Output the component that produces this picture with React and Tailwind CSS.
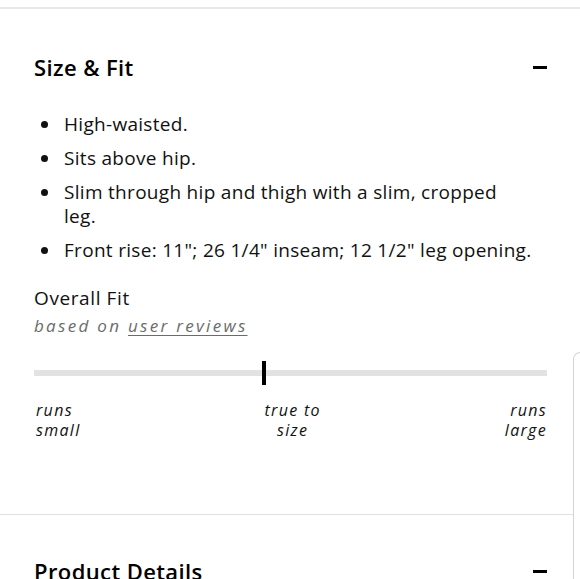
export default function App() {
  const bullets = [
    ['High-waisted.'],
    ['Sits above hip.'],
    ['Slim through hip and thigh with a slim, cropped', 'leg.'],
    ['Front rise: 11"; 26 1/4" inseam; 12 1/2" leg opening.'],
  ];

  return (
    <div
      className="w-[580px] h-[579px] overflow-hidden bg-white text-[#111]"
      style={{ fontFamily: '"Open Sans", "Liberation Sans", sans-serif' }}
    >
      <div className="h-[7px]"></div>
      <div className="h-[2px] bg-[#e8e8e8]"></div>

      <div className="flex">
        <div className="w-[573px] shrink-0">
          {/* Size & Fit */}
          <div className="pl-[34px] pr-[26px]">
            <div className="pt-[44px] flex items-center justify-between">
              <h2 className="text-[22px] leading-[28px] font-semibold tracking-[0.4px] text-black">Size &amp; Fit</h2>
              <span className="block w-[14px] h-[3px] bg-black"></span>
            </div>

            <ul className="mt-[31px] space-y-[10px]">
              {bullets.map((lines) => (
                <li key={lines[0]} className="flex text-[19px] leading-[24px] tracking-[0.3px]">
                  <span className="w-[30px] shrink-0 flex pl-[7px] pt-[9px]">
                    <span className="block w-[7px] h-[7px] rounded-full bg-[#111]"></span>
                  </span>
                  <span>
                    {lines.map((l) => (
                      <span key={l} className="block">{l}</span>
                    ))}
                  </span>
                </li>
              ))}
            </ul>

            <p className="mt-[24px] text-[19px] leading-[24px] tracking-[0.6px]">Overall Fit</p>
            <p className="mt-[4px] text-[17px] leading-[24px] italic text-[#6b6b6b] tracking-[2.3px]">
              based on <span className="underline underline-offset-[3px]">user reviews</span>
            </p>

            <div className="relative mt-[23px] h-[24px] w-[513px]">
              <div className="absolute left-0 right-0 top-[9px] h-[6px] bg-[#e2e2e2]"></div>
              <div className="absolute left-[228px] top-0 w-[4px] h-[24px] bg-black"></div>
            </div>

            <div className="mt-[15px] w-[513px] flex justify-between text-[16px] leading-[20px] italic tracking-[1.3px]">
              <div className="pl-[2px]">
                <div>runs</div>
                <div>small</div>
              </div>
              <div className="text-center">
                <div>true to</div>
                <div>size</div>
              </div>
              <div className="text-right">
                <div>runs</div>
                <div>large</div>
              </div>
            </div>
          </div>

          <div className="mt-[74px] h-[1px] bg-[#e0e0e0]"></div>

          {/* Product Details */}
          <div className="pl-[34px] pr-[26px]">
            <div className="pt-[42px] flex items-center justify-between">
              <h2 className="text-[22px] leading-[28px] font-semibold tracking-[0.4px] text-black">Product Details</h2>
              <span className="block w-[14px] h-[3px] bg-black"></span>
            </div>
          </div>
        </div>

        <div className="flex-1 mt-[343px] border-l border-t border-[#d4d4d4] rounded-tl-[10px] h-[300px]"></div>
      </div>
    </div>
  );
}
